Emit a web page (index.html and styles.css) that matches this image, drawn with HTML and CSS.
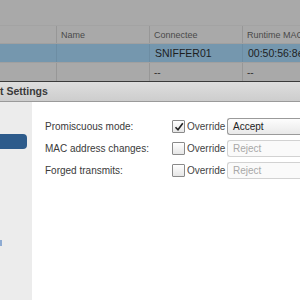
FILE: index.html
```html
<!DOCTYPE html>
<html lang="en">
<head>
    <meta charset="UTF-8">
    <title>Port Settings</title>
    <link rel="stylesheet" href="styles.css">
</head>
<body>
    <div class="grid-area">
        <div class="grid-row grid-head">
            <div class="cell"></div>
            <div class="cell">Name</div>
            <div class="cell">Connectee</div>
            <div class="cell">Runtime MAC</div>
        </div>
        <div class="grid-row selected">
            <div class="cell"></div>
            <div class="cell"></div>
            <div class="cell">SNIFFER01</div>
            <div class="cell">00:50:56:8e</div>
        </div>
        <div class="grid-row">
            <div class="cell"></div>
            <div class="cell"></div>
            <div class="cell">--</div>
            <div class="cell">--</div>
        </div>
    </div>

    <div class="dialog">
        <div class="dialog-title">t Settings</div>
        <div class="dialog-body">
            <div class="sidebar">
                <div class="tab-active"></div>
                <div class="tab-mark"></div>
            </div>
            <div class="content">
                <div class="setting">
                    <span class="label">Promiscuous mode:</span>
                    <span class="override">
                        <span class="checkbox checked">
                            <svg width="10" height="10" viewBox="0 0 10 10"><path d="M1.5 5.2 L4 7.8 L8.8 1.2" fill="none" stroke="#222" stroke-width="1.6"/></svg>
                        </span>
                        Override
                    </span>
                    <span class="select">Accept</span>
                </div>
                <div class="setting">
                    <span class="label">MAC address changes:</span>
                    <span class="override"><span class="checkbox"></span>Override</span>
                    <span class="select disabled">Reject</span>
                </div>
                <div class="setting">
                    <span class="label">Forged transmits:</span>
                    <span class="override"><span class="checkbox"></span>Override</span>
                    <span class="select disabled">Reject</span>
                </div>
            </div>
        </div>
    </div>
</body>
</html>
```

FILE: styles.css
```css
body {
    margin: 0;
    font-family: "Liberation Sans", Arial, sans-serif;
    font-size: 10px;
    color: #333;
    background-color: #fff;
    overflow: hidden;
}

.grid-area {
    background-color: #a9a9a9;
    padding-top: 25px;
    border-bottom: 1px solid #3a3a3a;
}

.grid-row {
    display: grid;
    grid-template-columns: 57px 93px 93px 1fr;
    height: 18px;
    border-bottom: 1px solid #a0a0a0;
}

.grid-row:last-child {
    border-bottom: none;
}

.grid-head {
    color: #4a4a4a;
    font-size: 9px;
    height: 17px;
    border-top: 1px solid #a3a3a3;
}

.cell {
    display: flex;
    align-items: center;
    padding-left: 4px;
    border-right: 1px solid #979797;
    white-space: nowrap;
    overflow: hidden;
}

.cell:last-child {
    border-right: none;
}

.selected {
    background-color: #7597ae;
    color: #1e1e1e;
    font-size: 10.5px;
}

.selected .cell {
    padding-left: 5px;
    border-right-color: #6d8da3;
}

.dialog-title {
    height: 19px;
    line-height: 19px;
    font-size: 10.5px;
    font-weight: bold;
    color: #3a3a3a;
    background: linear-gradient(#dedede, #cdcdcd);
    border-bottom: 1px solid #9a9a9a;
    white-space: nowrap;
}

.dialog-body {
    display: flex;
    height: 200px;
}

.sidebar {
    width: 32px;
    background-color: #ececec;
    padding-top: 32px;
    box-sizing: border-box;
}

.tab-active {
    width: 27px;
    height: 15px;
    background-color: #2d5b8b;
    border-radius: 0 4px 4px 0;
}

.tab-mark {
    width: 2px;
    height: 6px;
    margin-top: 91px;
    background-color: #8eabd2;
}

.content {
    flex: 1;
    padding: 16px 0 0 13px;
    display: flex;
    flex-direction: column;
    gap: 5px;
}

.setting {
    display: flex;
    align-items: center;
    height: 17px;
    white-space: nowrap;
}

.label {
    width: 127px;
    color: #3a3a3a;
}

.override {
    display: flex;
    align-items: center;
    gap: 2px;
    width: 55px;
    color: #444;
}

.checkbox {
    width: 11px;
    height: 11px;
    border: 1px solid #8a8a8a;
    border-radius: 1px;
    background: linear-gradient(#fff, #e6e6e6);
    display: flex;
    align-items: center;
    justify-content: center;
}

.select {
    flex: 1;
    height: 15px;
    line-height: 15px;
    padding-left: 5px;
    border: 1px solid #9a9a9a;
    border-right: none;
    border-radius: 3px 0 0 3px;
    background: linear-gradient(#fdfdfd, #e9e9e9);
    color: #222;
}

.select.disabled {
    border-color: #d2d2d2;
    background: #fafafa;
    color: #a8a8a8;
}
```
